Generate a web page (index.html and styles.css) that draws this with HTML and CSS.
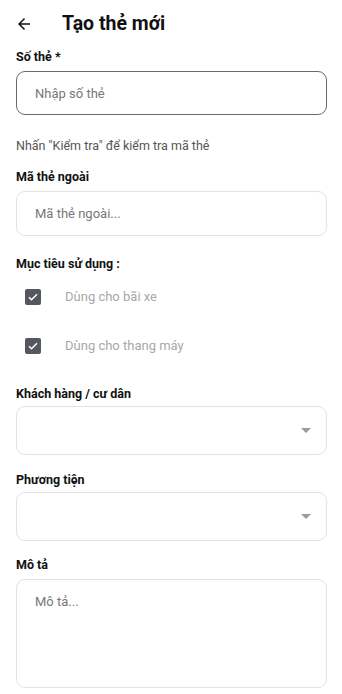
FILE: index.html
```html
<!DOCTYPE html>
<html lang="vi">
<head>
  <meta charset="UTF-8">
  <title>Tạo thẻ mới</title>
  <link rel="stylesheet" href="styles.css">
</head>
<body>
  <header class="topbar">
    <span class="back">
      <svg width="18" height="18" viewBox="0 0 24 24"><path d="M20 11H7.83l5.59-5.59L12 4l-8 8 8 8 1.41-1.41L7.83 13H20v-2z" fill="#111"/></svg>
    </span>
    <h1>Tạo thẻ mới</h1>
  </header>

  <div class="form">
    <div class="field f-card">
      <label>Số thẻ *</label>
      <div class="box box-active">Nhập số thẻ</div>
    </div>
    <p class="hint">Nhấn "Kiểm tra" để kiểm tra mã thẻ</p>

    <div class="field f-ext">
      <label>Mã thẻ ngoài</label>
      <div class="box">Mã thẻ ngoài...</div>
    </div>

    <div class="field f-use">
      <label>Mục tiêu sử dụng :</label>
      <div class="check-row"><span class="check"><svg width="12" height="12" viewBox="0 0 24 24"><path d="M4 12.5l5 5L20 6.5" stroke="#fff" stroke-width="3" fill="none"/></svg></span>Dùng cho bãi xe</div>
      <div class="check-row"><span class="check"><svg width="12" height="12" viewBox="0 0 24 24"><path d="M4 12.5l5 5L20 6.5" stroke="#fff" stroke-width="3" fill="none"/></svg></span>Dùng cho thang máy</div>
    </div>

    <div class="field f-customer">
      <label>Khách hàng / cư dân</label>
      <div class="box select"><span class="caret"></span></div>
    </div>

    <div class="field f-vehicle">
      <label>Phương tiện</label>
      <div class="box select"><span class="caret"></span></div>
    </div>

    <div class="field f-desc">
      <label>Mô tả</label>
      <div class="box area">Mô tả...</div>
    </div>
  </div>
</body>
</html>
```

FILE: styles.css
```css
body {margin:0; background:#fff; font-family:Roboto, "Noto Sans", Arial, sans-serif; color:#111;}
.topbar {height:48px; display:flex; align-items:center; padding-left:15px;}
.back {display:flex; width:18px; height:18px;}
.topbar h1 {margin:0 0 0 29px; font-size:19.5px; font-weight:700; line-height:24px;}
.form {padding:0 15px 0 16px;}
.field {display:flex; flex-direction:column;}
.field label {font-size:12.5px; font-weight:700; line-height:16px; margin-bottom:6px;}
.box {box-sizing:border-box; border:1px solid #e3e3e3; border-radius:9px; height:45px; display:flex; align-items:center; padding-left:18px; font-size:13px; color:#777;}
.box-active {border-color:#6a6a6a; height:44px;}
.f-card {margin-top:1px;}
.hint {margin:23px 0 0; font-size:12.5px; line-height:16px; color:#555;}
.f-ext {margin-top:15px;}
.f-use {margin-top:20px;}
.f-use label {margin-bottom:0;}
.check-row {height:49px; display:flex; align-items:center; padding-left:9px; font-size:13px; color:#a8a8a8;}
.check {width:16px; height:16px; background:#54585c; border-radius:2px; display:flex; align-items:center; justify-content:center; margin-right:24px;}
.f-customer {margin-top:16px;}
.f-customer label, .f-vehicle label {margin-bottom:4px;}
.f-vehicle {margin-top:17px;}
.select {height:49px; justify-content:flex-end; padding-right:15px;}
.caret {width:0; height:0; border-left:5px solid transparent; border-right:5px solid transparent; border-top:5px solid #9a9a9a;}
.f-desc {margin-top:16px;}
.area {height:109px; align-items:flex-start; padding-top:14px;}
```
